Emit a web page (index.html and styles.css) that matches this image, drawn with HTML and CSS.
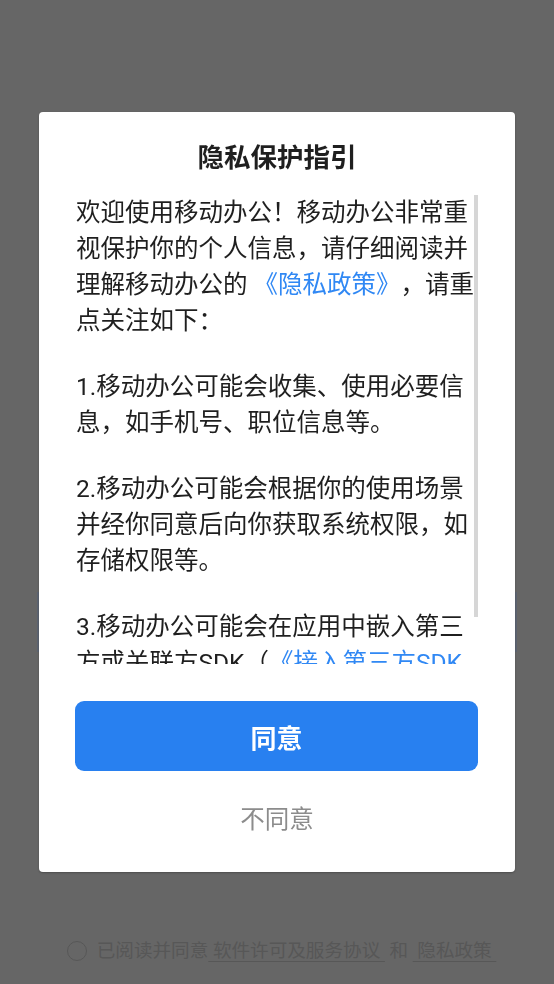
FILE: index.html
```html
<!DOCTYPE html>
<html lang="zh-CN">
<head>
<meta charset="utf-8">
<title>隐私保护指引</title>
<link rel="stylesheet" href="styles.css">
</head>
<body>
  <div class="page">
    <div class="page-button"></div>
    <div class="agree-row">
      <span class="radio"></span>
      <span class="agree-text">已阅读并同意<span class="u">&nbsp;软件许可及服务协议&nbsp;</span>&nbsp;和&nbsp;<span class="u">&nbsp;隐私政策&nbsp;</span></span>
    </div>
  </div>

  <div class="overlay">
    <div class="dialog">
      <h1 class="title">隐私保护指引</h1>
      <div class="scroll-wrap">
        <div class="scroll">
          <p class="para">欢迎使用移动办公！移动办公非常重视保护你的个人信息，请仔细阅读并理解移动办公的 <span class="link">《隐私政策》</span>，请重点关注如下：</p>
          <p class="para">1.移动办公可能会收集、使用必要信息，如手机号、职位信息等。</p>
          <p class="para">2.移动办公可能会根据你的使用场景并经你同意后向你获取系统权限，如存储权限等。</p>
          <p class="para">3.移动办公可能会在应用中嵌入第三方或关联方SDK（<span class="link">《接入第三方SDK目录》</span>），收集必要信息。</p>
        </div>
        <div class="thumb"></div>
      </div>
      <button class="btn-agree">同意</button>
      <div class="btn-disagree">不同意</div>
    </div>
  </div>
</body>
</html>
```

FILE: styles.css
```css
* { box-sizing: border-box; }

html, body {
  margin: 0;
  padding: 0;
}

body {
  width: 554px;
  height: 984px;
  background: #666666;
  font-family: Roboto, "Noto Sans CJK SC", sans-serif;
  text-spacing-trim: space-all;
  overflow: hidden;
}

.page {
  display: flex;
  flex-direction: column;
  align-items: center;
  height: 984px;
  padding-top: 592px;
}

.page-button {
  width: 480px;
  height: 60px;
  background: #5d6471;
}

.agree-row {
  margin-top: 286px;
  margin-left: 9px;
  display: flex;
  align-items: center;
  gap: 10px;
  color: #575757;
  font-size: 18.6px;
  line-height: 26px;
}

.radio {
  width: 20px;
  height: 20px;
  border: 1.5px solid #575757;
  border-radius: 50%;
}

.agree-text .u {
  text-decoration: underline;
  text-underline-offset: 4px;
}

.overlay {
  position: fixed;
  inset: 0;
  display: flex;
  align-items: center;
  justify-content: center;
}

.dialog {
  width: 476px;
  background: #ffffff;
  border-radius: 4px;
  box-shadow: 0 1px 2px rgba(0, 0, 0, 0.25);
  padding: 28px 0 34px 0;
  display: flex;
  flex-direction: column;
}

.title {
  margin: 0;
  text-align: center;
  font-size: 26.5px;
  line-height: 36px;
  font-weight: 700;
  color: #1f1f1f;
}

.scroll-wrap {
  position: relative;
  margin: 19px 0 0 37px;
  width: 403px;
  height: 469px;
}

.scroll {
  height: 100%;
  overflow: hidden;
  padding-right: 3px;
  color: #1f1f1f;
  font-size: 24.5px;
  line-height: 36px;
}

.thumb {
  position: absolute;
  top: 0;
  right: 1px;
  width: 4px;
  height: 422px;
  background: #d6d6d6;
}

.para {
  margin: 0 0 30px 0;
}

.para:last-child {
  margin-bottom: 0;
}

.link {
  color: #3088f4;
}

.btn-agree {
  margin: 37px 0 0 36px;
  width: 403px;
  height: 70px;
  border: none;
  border-radius: 9px;
  background: #2880f0;
  color: #ffffff;
  font-family: Roboto, "Noto Sans CJK SC", sans-serif;
  font-size: 26px;
  font-weight: 700;
  padding: 0;
}

.btn-disagree {
  margin-top: 31px;
  text-align: center;
  font-size: 24.5px;
  line-height: 36px;
  color: #8c8c8c;
}
```
